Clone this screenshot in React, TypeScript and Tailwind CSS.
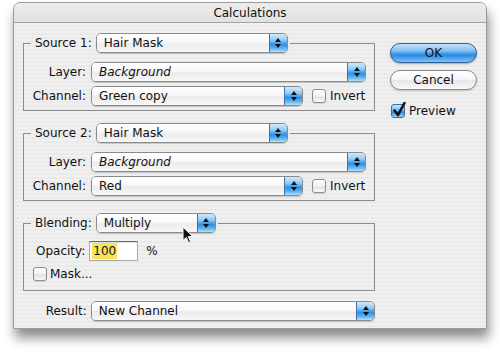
import type { ReactNode } from 'react';

const stripes =
  'bg-[repeating-linear-gradient(180deg,#f0f0f0_0px,#f0f0f0_2px,#eaeaea_2px,#eaeaea_4px)]';

function Arrows() {
  return (
    <div className="w-[18px] flex flex-col items-center justify-center gap-[2px] border-l border-[#3f72a8] bg-[linear-gradient(180deg,#cfe9fc_0%,#8fcaf6_35%,#4aa3ec_50%,#2f8ee3_60%,#6dbdf5_85%,#b7e1fc_100%)]">
      <svg width="6" height="4" viewBox="0 0 6 4"><path d="M3 0L6 4H0Z" fill="#111" /></svg>
      <svg width="6" height="4" viewBox="0 0 6 4"><path d="M0 0H6L3 4Z" fill="#111" /></svg>
    </div>
  );
}

function Popup({ width, text, italic }: { width: string; text: string; italic?: boolean }) {
  return (
    <div className={`${width} h-[20px] flex rounded-[5px] border border-[#8a8a8a] overflow-hidden shadow-[0_1px_1px_rgba(0,0,0,0.18)]`}>
      <div
        className={`flex-1 flex items-center pl-[7px] text-[12px] text-[#111] bg-[linear-gradient(180deg,#ffffff_0%,#f8f8f8_45%,#ebebeb_55%,#f7f7f7_100%)] ${italic ? 'italic' : ''}`}
      >
        {text}
      </div>
      <Arrows />
    </div>
  );
}

function Checkbox({ checked }: { checked?: boolean }) {
  if (checked) {
    return (
      <div className="relative w-[14px] h-[14px] rounded-[3px] border border-[#3d6a9c] bg-[linear-gradient(180deg,#cbe8fc_0%,#6cb9f2_45%,#2f8ee3_60%,#9ad4fb_100%)]">
        <svg className="absolute left-[1px] top-[-3px]" width="13" height="15" viewBox="0 0 13 15">
          <path d="M1.5 8.5L5 13L11.5 1" fill="none" stroke="#111" strokeWidth="2.6" strokeLinecap="round" strokeLinejoin="round" />
        </svg>
      </div>
    );
  }
  return (
    <div className="w-[14px] h-[14px] rounded-[3px] border border-[#8c8c8c] bg-[linear-gradient(180deg,#ffffff_0%,#f2f2f2_50%,#e2e2e2_60%,#fbfbfb_100%)] shadow-[0_1px_1px_rgba(0,0,0,0.12)]" />
  );
}

function Label({ children, width }: { children: ReactNode; width: string }) {
  return <span className={`${width} text-right text-[12px] text-[#111]`}>{children}</span>;
}

function SourceGroup({ n, channel }: { n: number; channel: string }) {
  return (
    <fieldset className="border border-[#8b8b8b] pb-[4px]">
      <legend className="ml-[7px] pl-[4px] pr-[2px]">
        <div className="flex items-center gap-[4px]">
          <span className="text-[12px] text-[#111]">Source {n}:</span>
          <Popup width="w-[192px]" text="Hair Mask" />
        </div>
      </legend>
      <div className="pt-[9px] flex flex-col gap-[4px]">
        <div className="flex items-center gap-[5px] h-[20px]">
          <Label width="w-[62px]">Layer:</Label>
          <Popup width="w-[275px]" text="Background" italic />
        </div>
        <div className="flex items-center gap-[5px] h-[20px]">
          <Label width="w-[62px]">Channel:</Label>
          <Popup width="w-[212px]" text={channel} />
          <div className="ml-[4px] flex items-center gap-[4px]">
            <Checkbox />
            <span className="text-[12px] text-[#111]">Invert</span>
          </div>
        </div>
      </div>
    </fieldset>
  );
}

export default function App() {
  return (
    <div
      className="relative w-[500px] h-[352px] bg-white pt-[2px] pl-[13px] overflow-hidden"
      style={{ fontFamily: '"DejaVu Sans", "Lucida Grande", sans-serif' }}
    >
      <div className={`w-[474px] h-[327px] rounded-t-[7px] border border-[#9a9a9a] ${stripes} shadow-[2px_9px_12px_rgba(0,0,0,0.45)] flex flex-col overflow-hidden`}>
        {/* Title bar */}
        <div className="h-[20px] shrink-0 flex items-center justify-center border-b border-[#a3a3a3] bg-[linear-gradient(180deg,#ececec,#e2e2e2)] text-[12px] text-[#111]">
          Calculations
        </div>

        <div className="flex pl-[9px] pt-[10px]">
          {/* Left column */}
          <div className="w-[352px] flex flex-col">
            <SourceGroup n={1} channel="Green copy" />
            <div className="mt-[12px]">
              <SourceGroup n={2} channel="Red" />
            </div>

            <fieldset className="mt-[12px] border border-[#8b8b8b] pb-[7px]">
              <legend className="ml-[7px] pl-[4px] pr-[2px]">
                <div className="flex items-center gap-[4px]">
                  <span className="text-[12px] text-[#111]">Blending:</span>
                  <Popup width="w-[120px]" text="Multiply" />
                </div>
              </legend>
              <div className="mt-[8px] pl-[12px] flex items-center h-[20px]">
                <span className="text-[12px] text-[#111]">Opacity:</span>
                <div className="ml-[4px] w-[49px] h-[20px] flex items-center pl-[2px] bg-white border border-[#a8a8a8] border-t-[#6e6e6e] shadow-[inset_0_1px_1px_rgba(0,0,0,0.15)]">
                  <span className="bg-[#f8e35a] text-[12px] text-[#111] leading-[16px] px-[1px]">100</span>
                </div>
                <span className="ml-[8px] text-[12px] text-[#111]">%</span>
              </div>
              <div className="mt-[4px] pl-[9px] flex items-center gap-[3px]">
                <Checkbox />
                <span className="text-[12px] text-[#111]">Mask...</span>
              </div>
            </fieldset>

            <div className="mt-[10px] flex items-center gap-[4px] h-[20px]">
              <Label width="w-[64px]">Result:</Label>
              <Popup width="w-[285px]" text="New Channel" />
            </div>
          </div>

          {/* Right column */}
          <div className="ml-[15px] w-[87px] pt-[10px] flex flex-col">
            <button className="h-[20px] rounded-full border border-[#2f5f93] bg-[linear-gradient(180deg,#c7e4fb_0%,#7cbdf4_40%,#3895e6_55%,#2f8be0_65%,#7fc6fa_100%)] text-[12px] text-[#111] shadow-[0_1px_2px_rgba(0,0,0,0.3)]">
              OK
            </button>
            <button className="mt-[7px] h-[20px] rounded-full border border-[#8a8a8a] bg-[linear-gradient(180deg,#ffffff_0%,#f6f6f6_45%,#e6e6e6_55%,#fafafa_100%)] text-[12px] text-[#111] shadow-[0_1px_2px_rgba(0,0,0,0.2)]">
              Cancel
            </button>
            <div className="mt-[12px] ml-[1px] flex items-center gap-[4px]">
              <Checkbox checked />
              <span className="text-[12px] text-[#111]">Preview</span>
            </div>
          </div>
        </div>
      </div>

      {/* Mouse pointer */}
      <svg className="absolute left-[182px] top-[226px]" width="12" height="18" viewBox="0 0 12 18">
        <path d="M1 1V14.5L4.3 11.4L6.6 16.6L8.6 15.7L6.3 10.6H10.8Z" fill="#111" stroke="#fff" strokeWidth="1" strokeLinejoin="round" />
      </svg>
    </div>
  );
}
